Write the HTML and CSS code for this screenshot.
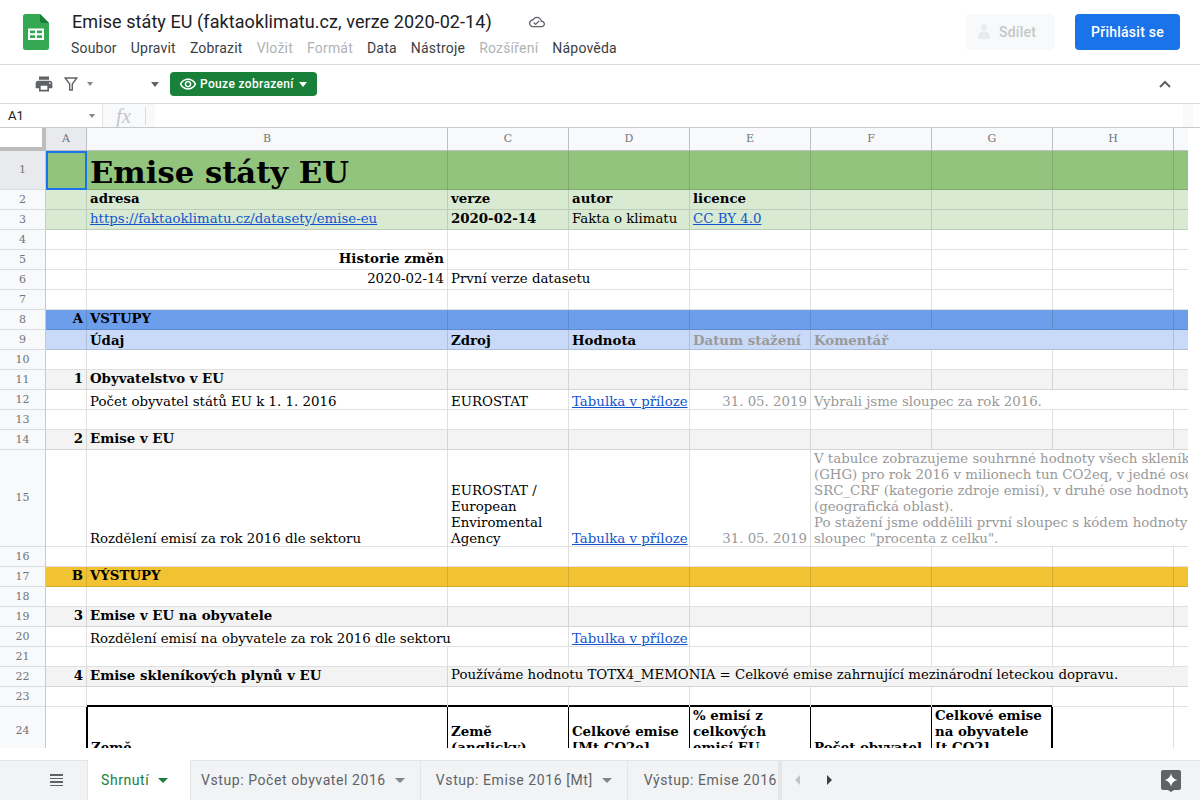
FILE: index.html
```html
<!DOCTYPE html>
<html lang="cs">
<head>
    <meta charset="UTF-8">
    <meta name="viewport" content="width=device-width, initial-scale=1.0">
    <title>Emise státy EU</title>
    <link rel="stylesheet" href="styles.css">
</head>
<body>
    <!-- Title bar and menu -->
    <header class="top-bar">
        <svg class="logo" width="26" height="36" viewBox="0 0 26 36">
            <path d="M2.500 0H17l9 9v24.500a2.500 2.500 0 0 1-2.500 2.500h-21A2.500 2.500 0 0 1 0 33.500v-31A2.500 2.500 0 0 1 2.500 0z" fill="#34a853"/>
            <path d="M17 0l9 9h-7a2 2 0 0 1-2-2z" fill="#188038"/>
            <path d="M5 14.500h16V26H5zm2 2v2.800h5v-2.800zm7 0v2.800h5v-2.800zm-7 4.800V24h5v-2.700zm7 0V24h5v-2.700z" fill="#fff" fill-rule="evenodd"/>
        </svg>
        <div class="doc-info">
            <div class="doc-title">
                <span>Emise státy EU (faktaoklimatu.cz, verze 2020-02-14)</span>
                <svg class="cloud" width="16" height="16" viewBox="0 0 24 24"><path fill="#5f6368" d="M19.35 10.04C18.67 6.59 15.64 4 12 4 9.11 4 6.6 5.64 5.35 8.04 2.34 8.36 0 10.91 0 14c0 3.31 2.69 6 6 6h13c2.76 0 5-2.24 5-5 0-2.64-2.05-4.78-4.65-4.96zM19 18H6c-2.21 0-4-1.79-4-4 0-2.05 1.53-3.76 3.56-3.97l1.07-.11.5-.95C8.08 7.14 9.94 6 12 6c2.62 0 4.88 1.86 5.39 4.43l.3 1.5 1.53.11c1.56.1 2.78 1.41 2.78 2.96 0 1.65-1.35 3-3 3zm-9-3.82l-2.09-2.09L6.5 13.5 10 17l6.01-6.01-1.41-1.41z"/></svg>
            </div>
            <nav class="menu">
                <span>Soubor</span>
                <span>Upravit</span>
                <span>Zobrazit</span>
                <span class="off">Vložit</span>
                <span class="off">Formát</span>
                <span>Data</span>
                <span>Nástroje</span>
                <span class="off">Rozšíření</span>
                <span>Nápověda</span>
            </nav>
        </div>
        <div class="btn-share">
            <svg width="14" height="16" viewBox="0 0 14 16"><circle cx="7" cy="3.5" r="3" fill="#e8eaed"/><path d="M1 15c-.6-3 .4-7.500 6-7.500s6.600 4.500 6 7.500z" fill="#e8eaed"/></svg>
            <span>Sdílet</span>
        </div>
        <div class="btn-login">Přihlásit se</div>
    </header>

    <!-- Toolbar -->
    <div class="toolbar">
        <svg class="ico-print" width="20" height="20" viewBox="0 0 24 24"><path fill="#5f6368" d="M19 8H5c-1.660 0-3 1.340-3 3v6h4v4h12v-4h4v-6c0-1.660-1.340-3-3-3zm-3 11H8v-5h8v5zm3-7c-.55 0-1-.45-1-1s.45-1 1-1 1 .45 1 1-.45 1-1 1zm-1-9H6v4h12V3z"/></svg>
        <svg class="ico-filter" width="14" height="14" viewBox="0 0 14 14"><path fill="none" stroke="#5f6368" stroke-width="1.400" d="M1.200 1h11.600L8.300 7v6H5.700V7z"/></svg>
        <i class="caret small first"></i>
        <i class="caret second"></i>
        <div class="btn-view">
            <svg width="18" height="18" viewBox="0 0 24 24"><path fill="#fff" d="M12 6.500c3.790 0 7.170 2.130 8.820 5.500-1.650 3.370-5.020 5.500-8.820 5.500S4.830 15.370 3.180 12C4.830 8.630 8.210 6.500 12 6.500m0-2C7 4.500 2.730 7.610 1 12c1.730 4.390 6 7.500 11 7.500s9.270-3.110 11-7.500c-1.730-4.390-6-7.500-11-7.500zm0 5c1.380 0 2.500 1.120 2.500 2.500s-1.120 2.500-2.500 2.500-2.500-1.120-2.500-2.500 1.120-2.500 2.500-2.500m0-2c-2.480 0-4.500 2.020-4.500 4.500s2.020 4.500 4.500 4.500 4.500-2.020 4.500-4.500-2.020-4.500-4.500-4.500z"/></svg>
            <span>Pouze zobrazení</span>
            <i class="caret white"></i>
        </div>
        <svg class="ico-collapse" width="14" height="10" viewBox="0 0 14 10"><path fill="none" stroke="#5f6368" stroke-width="2" d="M2 8l5-5 5 5"/></svg>
    </div>

    <!-- Formula bar -->
    <div class="formula-bar">
        <div class="name-box"><span>A1</span><i class="caret small"></i></div>
        <div class="fx-box"><span class="fx">fx</span><i class="fx-sep"></i></div>
        <div class="formula-input"></div>
        <div class="formula-end"></div>
    </div>

    <!-- Sheet -->
    <div class="sheet">
        <table class="grid">
            <colgroup>
                <col class="c-head"><col class="c-a"><col class="c-b">
                <col class="c-n"><col class="c-n"><col class="c-n"><col class="c-n"><col class="c-n"><col class="c-n"><col class="c-n">
            </colgroup>
            <tr class="col-heads">
                <td class="corner"></td><td class="sel">A</td><td>B</td><td>C</td><td>D</td><td>E</td><td>F</td><td>G</td><td>H</td><td></td>
            </tr>
            <tr class="r-title bg-green">
                <th class="sel">1</th><td class="active"></td><td class="big">Emise státy EU</td><td></td><td></td><td></td><td></td><td></td><td></td><td></td>
            </tr>
            <tr class="up bg-lgreen">
                <th>2</th><td></td><td class="b">adresa</td><td class="b">verze</td><td class="b">autor</td><td class="b">licence</td><td></td><td></td><td></td><td></td>
            </tr>
            <tr class="up plain bg-lgreen">
                <th>3</th><td></td><td><a href="#">https://faktaoklimatu.cz/datasety/emise-eu</a></td><td class="b">2020-02-14</td><td>Fakta o klimatu</td><td><a href="#">CC BY 4.0</a></td><td></td><td></td><td></td><td></td>
            </tr>
            <tr><th>4</th><td></td><td></td><td></td><td></td><td></td><td></td><td></td><td></td><td></td></tr>
            <tr class="up"><th>5</th><td></td><td class="b num">Historie změn</td><td></td><td></td><td></td><td></td><td></td><td></td><td></td></tr>
            <tr class="up plain"><th>6</th><td></td><td class="num">2020-02-14</td><td colspan="2">První verze datasetu</td><td></td><td></td><td></td><td></td></tr>
            <tr><th>7</th><td></td><td></td><td></td><td></td><td></td><td></td><td></td><td></td><td></td></tr>
            <tr class="up bg-blue">
                <th>8</th><td class="b num">A</td><td class="b">VSTUPY</td><td></td><td></td><td></td><td></td><td></td><td></td><td></td>
            </tr>
            <tr class="mid bg-lblue">
                <th>9</th><td></td><td class="b">Údaj</td><td class="b">Zdroj</td><td class="b">Hodnota</td><td class="b muted">Datum stažení</td><td class="b muted" colspan="3">Komentář</td><td></td>
            </tr>
            <tr><th>10</th><td></td><td></td><td></td><td></td><td></td><td></td><td></td><td></td><td></td></tr>
            <tr class="up bg-grey">
                <th>11</th><td class="b num">1</td><td class="b">Obyvatelstvo v EU</td><td></td><td></td><td></td><td></td><td></td><td></td><td></td>
            </tr>
            <tr>
                <th>12</th><td></td><td>Počet obyvatel států EU k 1. 1. 2016</td><td>EUROSTAT</td><td><a href="#">Tabulka v příloze</a></td><td class="num muted">31. 05. 2019</td><td class="muted" colspan="4">Vybrali jsme sloupec za rok 2016.</td>
            </tr>
            <tr><th>13</th><td></td><td></td><td></td><td></td><td></td><td></td><td></td><td></td><td></td></tr>
            <tr class="up bg-grey">
                <th>14</th><td class="b num">2</td><td class="b">Emise v EU</td><td></td><td></td><td></td><td></td><td></td><td></td><td></td>
            </tr>
            <tr class="r-tall">
                <th>15</th><td></td><td>Rozdělení emisí za rok 2016 dle sektoru</td>
                <td>EUROSTAT /<br>European<br>Enviromental<br>Agency</td>
                <td><a href="#">Tabulka v příloze</a></td>
                <td class="num muted">31. 05. 2019</td>
                <td class="muted" colspan="4">V tabulce zobrazujeme souhrnné hodnoty všech skleník<br>(GHG) pro rok 2016 v milionech tun CO2eq, v jedné ose<br>SRC_CRF (kategorie zdroje emisí), v druhé ose hodnoty<br>(geografická oblast).<br>Po stažení jsme oddělili první sloupec s kódem hodnoty<br>sloupec "procenta z celku".</td>
            </tr>
            <tr><th>16</th><td></td><td></td><td></td><td></td><td></td><td></td><td></td><td></td><td></td></tr>
            <tr class="up bg-yellow">
                <th>17</th><td class="b num">B</td><td class="b">VÝSTUPY</td><td></td><td></td><td></td><td></td><td></td><td></td><td></td>
            </tr>
            <tr><th>18</th><td></td><td></td><td></td><td></td><td></td><td></td><td></td><td></td><td></td></tr>
            <tr class="up bg-grey">
                <th>19</th><td class="b num">3</td><td class="b">Emise v EU na obyvatele</td><td></td><td></td><td></td><td></td><td></td><td></td><td></td>
            </tr>
            <tr>
                <th>20</th><td></td><td colspan="2">Rozdělení emisí na obyvatele za rok 2016 dle sektoru</td><td><a href="#">Tabulka v příloze</a></td><td></td><td></td><td></td><td></td><td></td>
            </tr>
            <tr><th>21</th><td></td><td></td><td></td><td></td><td></td><td></td><td></td><td></td><td></td></tr>
            <tr class="up bg-grey">
                <th>22</th><td class="b num">4</td><td class="b">Emise skleníkových plynů v EU</td><td colspan="7">Používáme hodnotu TOTX4_MEMONIA = Celkové emise zahrnující mezinárodní leteckou dopravu.</td>
            </tr>
            <tr>
                <th>23</th><td></td><td class="edge"></td><td class="edge"></td><td class="edge"></td><td class="edge"></td><td class="edge"></td><td class="edge"></td><td></td><td></td>
            </tr>
            <tr class="r-data-head">
                <th>24</th><td class="before"></td>
                <td class="b box first">Země</td>
                <td class="b box">Země<br>(anglicky)</td>
                <td class="b box">Celkové emise<br>[Mt CO2e]</td>
                <td class="b box">% emisí z<br>celkových<br>emisí EU</td>
                <td class="b box">Počet obyvatel</td>
                <td class="b box last">Celkové emise<br>na obyvatele<br>[t CO2]</td>
                <td></td><td></td>
            </tr>
        </table>
    </div>

    <!-- Sheet tabs -->
    <footer class="tabs">
        <div class="all-sheets"><i></i><i></i><i></i><i></i></div>
        <div class="tab active-tab"><span>Shrnutí</span><i class="caret green"></i></div>
        <div class="tab after-active"><span>Vstup: Počet obyvatel 2016</span><i class="caret"></i></div>
        <div class="tab"><span>Vstup: Emise 2016 [Mt]</span><i class="caret"></i></div>
        <div class="tab cut"><span>Výstup: Emise 2016</span></div>
        <div class="tab-arrows"><i class="arrow left"></i><i class="arrow right"></i></div>
        <svg class="explore" width="20" height="22" viewBox="0 0 20 22">
            <path d="M2 0h16a2 2 0 0 1 2 2v16a2 2 0 0 1-2 2h-5l-3 2-3-2H2a2 2 0 0 1-2-2V2a2 2 0 0 1 2-2z" fill="#5f6368"/>
            <path d="M10 3.500c.8 3.600 2.800 5.700 6.500 6.500-3.700.8-5.700 2.900-6.500 6.500-.8-3.600-2.800-5.700-6.500-6.500 3.700-.8 5.700-2.900 6.500-6.500z" fill="#fff"/>
        </svg>
    </footer>
</body>
</html>
```

FILE: styles.css
```css
/* Global */
html, body {
    height: 100%;
}

body {
    margin: 0;
    display: flex;
    flex-direction: column;
    height: 100vh;
    overflow: hidden;
    font-family: Roboto, sans-serif;
    color: #202124;
    background-color: #fff;
}

/* Small dropdown triangles */
.caret {
    display: inline-block;
    width: 0;
    height: 0;
    border-left: 4.5px solid transparent;
    border-right: 4.5px solid transparent;
    border-top: 5px solid #5f6368;
}

.caret.small {
    border-left-width: 3.5px;
    border-right-width: 3.5px;
    border-top-width: 4px;
    border-top-color: #80868b;
}

.caret.white {
    border-top-color: #fff;
}

/* Title bar */
.top-bar {
    display: flex;
    height: 65px;
    flex-shrink: 0;
    box-sizing: border-box;
    border-bottom: 1px solid #dadce0;
    padding: 14px 20px 0 23px;
}

.logo {
    margin-right: 23px;
    flex-shrink: 0;
}

.doc-info {
    flex: 1;
    margin-top: -5px;
}

.doc-title {
    display: flex;
    align-items: center;
    font-size: 18px;
    letter-spacing: .08px;
    line-height: 26px;
    height: 26px;
    white-space: nowrap;
}

.cloud {
    margin-left: 37px;
}

.menu {
    display: flex;
    gap: 14px;
    margin: 3px 0 0 -1px;
    font-size: 14px;
    letter-spacing: .2px;
    line-height: 20px;
    color: #3c4043;
}

.menu .off {
    color: #b1b3b6;
}

.btn-share {
    display: flex;
    align-items: center;
    gap: 8px;
    width: 89px;
    height: 36px;
    box-sizing: border-box;
    padding-left: 11px;
    border-radius: 4px;
    background-color: #f8f9fa;
    color: #c4c6c8;
    font-size: 14px;
    font-weight: 500;
    letter-spacing: .25px;
}

.btn-login {
    width: 105px;
    height: 36px;
    margin-left: 20px;
    border-radius: 4px;
    background-color: #1a73e8;
    color: #fff;
    font-size: 14px;
    font-weight: 500;
    letter-spacing: .25px;
    line-height: 36px;
    text-align: center;
}

/* Toolbar */
.toolbar {
    display: flex;
    align-items: center;
    height: 39px;
    flex-shrink: 0;
    box-sizing: border-box;
    border-bottom: 1px solid #dadce0;
    padding-left: 34px;
}

.ico-filter {
    margin-left: 10px;
}

.caret.first {
    margin-left: 9px;
}

.caret.second {
    margin-left: 58px;
}

.btn-view {
    display: flex;
    align-items: center;
    width: 147px;
    height: 24px;
    box-sizing: border-box;
    margin-left: 11px;
    padding-left: 9px;
    border-radius: 4px;
    background-color: #188038;
    color: #fff;
    font-size: 12px;
    font-weight: 500;
    letter-spacing: .35px;
}

.btn-view span {
    margin: 0 5px 0 3px;
}

.ico-collapse {
    margin-left: auto;
    margin-right: 28px;
}

/* Formula bar */
.formula-bar {
    display: flex;
    height: 24px;
    flex-shrink: 0;
    box-sizing: border-box;
    border-bottom: 1px solid #c6c8ca;
}

.name-box {
    display: flex;
    align-items: center;
    justify-content: space-between;
    width: 103px;
    box-sizing: border-box;
    padding: 0 7px 0 8px;
    font-size: 13px;
    color: #202124;
    border-right: 1px solid #e3e3e3;
}

.fx-box {
    display: flex;
    align-items: center;
    width: 52px;
    box-sizing: border-box;
    padding-left: 13px;
    background-color: #f8f9fa;
}

.fx {
    font-family: "Liberation Serif", serif;
    font-style: italic;
    font-size: 21px;
    line-height: 22px;
    color: #c4c7cb;
}

.fx-sep {
    width: 1px;
    height: 18px;
    margin-left: 14px;
    background-color: #dadce0;
}

.formula-input {
    flex: 1;
}

.formula-end {
    width: 10px;
    margin-right: 7px;
    background-color: #f8f9fa;
}

/* Spreadsheet grid */
.sheet {
    flex: 1;
    width: 1188px;
    overflow: hidden;
}

.grid {
    table-layout: fixed;
    width: 1175px;
    border-collapse: separate;
    border-spacing: 0;
    font-family: "DejaVu Serif", serif;
    font-size: 13.33px;
    line-height: 16px;
    color: #000;
}

.c-head { width: 46px; }
.c-a { width: 41px; }
.c-b { width: 361px; }
.c-n { width: 121px; }

.grid tr {
    height: 20px;
}

.grid td {
    box-sizing: border-box;
    padding: 0 3px;
    vertical-align: bottom;
    white-space: nowrap;
    overflow: hidden;
    border-right: 1px solid rgba(0, 0, 0, .12);
    box-shadow: inset 0 -1px 0 rgba(0, 0, 0, .12);
}

.grid .up td {
    padding-bottom: 4px;
}

.grid .up.plain td:not(.b) {
    padding-bottom: 3px;
}

.grid .mid td {
    padding-bottom: 2px;
}

.grid th {
    box-sizing: border-box;
    padding: 0;
    font-size: 11px;
    font-weight: normal;
    color: #70757a;
    background-color: #f8f9fa;
    border-right: 1px solid #c6c8ca;
    border-bottom: 1px solid #dadce0;
}

.grid .col-heads {
    height: 23px;
}

.grid .col-heads td {
    padding: 0;
    vertical-align: middle;
    text-align: center;
    font-size: 11px;
    color: #70757a;
    background-color: #f8f9fa;
    box-shadow: none;
    border-right: 1px solid #bdbfc2;
    border-bottom: 1px solid #bdbfc2;
}

.grid .col-heads td.sel,
.grid th.sel {
    background-color: #e8eaed;
}

.grid .col-heads td.corner {
    background-color: #fff;
    border-right: 4px solid #bdbdbd;
    border-bottom: 4px solid #bdbdbd;
}

.grid .r-title {
    height: 39px;
}

.grid .r-tall {
    height: 97px;
}

.grid .r-data-head {
    height: 48px;
}

.active {
    outline: 2px solid #1a73e8;
    outline-offset: -2px;
}

.grid td.big {
    padding-bottom: 1px;
    font-size: 30.67px;
    font-weight: bold;
    line-height: 34px;
}

.b {
    font-weight: bold;
}

.num {
    text-align: right;
}

.grid .muted {
    color: #999;
}

.grid a {
    color: #1155cc;
}

/* Row colours */
.bg-green td { background-color: #93c47d; }
.bg-lgreen td { background-color: #d9ead3; }
.bg-blue td { background-color: #6d9eeb; }
.bg-lblue td { background-color: #c9daf8; }
.bg-yellow td { background-color: #f1c232; }
.bg-grey td { background-color: #f3f3f3; }

/* Black box around the data table header */
.grid td.edge {
    box-shadow: inset 0 -2px 0 #000;
}

.grid td.before {
    border-right-color: #000;
}

.grid td.box {
    border-right-color: #000;
    box-shadow: none;
}

.grid td.box.first {
    border-left: 1px solid #000;
}

.grid td.box.last {
    border-right: 2px solid #000;
}

/* Sheet tabs */
.tabs {
    display: flex;
    align-items: stretch;
    height: 52px;
    flex-shrink: 0;
    box-sizing: border-box;
    border-top: 12px solid #fff;
    background-color: #f1f3f4;
    box-shadow: inset 0 1px 0 #e3e5e7;
    font-size: 14px;
    letter-spacing: .58px;
    color: #5f6368;
}

.all-sheets {
    display: flex;
    flex-direction: column;
    justify-content: center;
    gap: 2px;
    width: 87px;
    box-sizing: border-box;
    padding-left: 50px;
    padding-right: 24px;
}

.all-sheets i {
    display: block;
    height: 1.500px;
    background-color: #5f6368;
}

.tab {
    display: flex;
    align-items: center;
    gap: 9px;
    padding: 0 15px;
    border-right: 1px solid #e3e5e7;
    white-space: nowrap;
}

.tab .caret {
    border-left-width: 5px;
    border-right-width: 5px;
    border-top-width: 5px;
    border-top-color: #80868b;
}

.active-tab {
    width: 104px;
    box-sizing: border-box;
    padding: 0 13px;
    background-color: #fff;
    color: #188038;
    border-left: 1px solid #e3e5e7;
    border-right: 1px solid #e3e5e7;
}

.tab .caret.green {
    border-top-color: #188038;
}

.after-active {
    padding-left: 10px;
}

.tab.cut {
    width: 154px;
    box-sizing: border-box;
    padding-left: 16px;
    overflow: hidden;
    border-right: 4px solid #e3e5e7;
}

.tab-arrows {
    display: flex;
    align-items: center;
    gap: 27px;
    padding-left: 13px;
}

.arrow {
    width: 0;
    height: 0;
    border-top: 5px solid transparent;
    border-bottom: 5px solid transparent;
}

.arrow.left {
    border-right: 5px solid #c1c4c8;
}

.arrow.right {
    border-left: 5px solid #3c4043;
}

.explore {
    margin: 10px 19px 0 auto;
}
```
